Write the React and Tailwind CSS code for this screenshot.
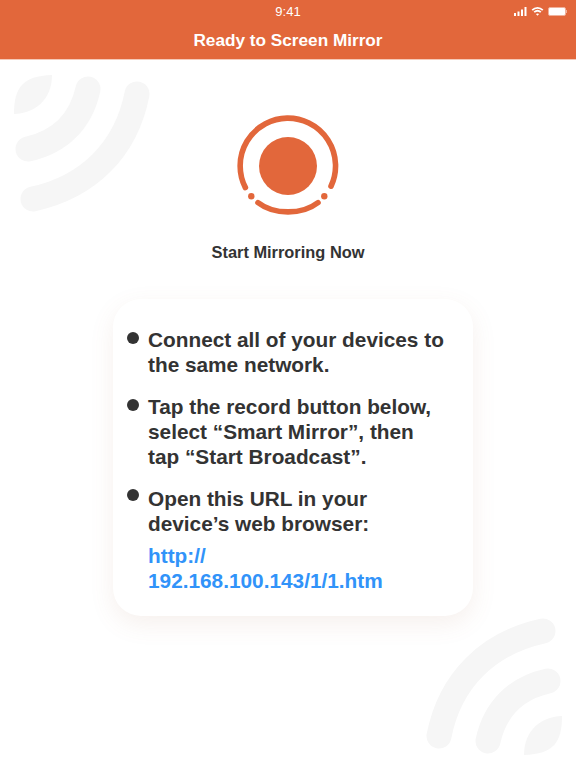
const WifiMark = ({ className }) => (
  <svg className={className} width="140" height="140" viewBox="0 0 140 140" fill="none">
    <path d="M2 40C2 14 10 2 40 1C40 24 25 39 2 40Z" fill="#f6f6f6" />
    <path d="M76 15C69 47 48 68 16 75" stroke="#f6f6f6" strokeWidth="25" strokeLinecap="round" />
    <path d="M125 20C114 76 76 113 21 125" stroke="#f6f6f6" strokeWidth="25" strokeLinecap="round" />
  </svg>
);

const RecordIcon = () => (
  <svg width="102" height="102" viewBox="0 0 102 102" fill="none" stroke="#e2673b" strokeWidth="5.6" strokeLinecap="round">
    <circle cx="51" cy="51" r="29" fill="#e2673b" stroke="none" />
    <path d="M8.4 72.6A47.7 47.7 0 1 1 94 71.2" />
    <path d="M21 87.6C37 100 65 100 81 87.6" />
    <circle cx="14.3" cy="81.2" r="3.2" fill="#e2673b" stroke="none" />
    <circle cx="87.3" cy="81.2" r="3.2" fill="#e2673b" stroke="none" />
  </svg>
);

const Bullet = ({ high, children }) => (
  <div className="flex">
    <div className={high ? "mt-[3px] ml-[14px] mr-[9px] h-[12px] w-[12px] shrink-0 rounded-full bg-[#333333]" : "mt-[5px] ml-[14px] mr-[9px] h-[12px] w-[12px] shrink-0 rounded-full bg-[#333333]"} />
    <div>{children}</div>
  </div>
);

export default function App() {
  return (
    <div className="relative h-[768px] w-[576px] overflow-hidden bg-white font-['Liberation_Sans',sans-serif]">
      {/* 背景のマーク */}
      <WifiMark className="absolute left-[12px] top-[74px]" />
      <WifiMark className="absolute bottom-[12px] right-[12px] rotate-180" />

      {/* ヘッダー */}
      <header className="relative bg-[#e2673b] text-white">
        <div className="relative flex h-[24px] items-center justify-center text-[13px]">
          9:41
          <div className="absolute right-[9px] top-[7px] flex items-center gap-[4px]">
            <svg width="13" height="9" viewBox="0 0 13 9" fill="white">
              <rect x="0" y="6" width="2" height="3" />
              <rect x="3.5" y="4.5" width="2" height="4.5" />
              <rect x="7" y="2.5" width="2" height="6.5" />
              <rect x="10.5" y="0" width="2" height="9" />
            </svg>
            <svg width="13" height="9" viewBox="0 0 12 9" fill="none" stroke="white" strokeWidth="1.8">
              <path d="M.7 3.2C3.8.2 8.2.2 11.3 3.2" />
              <path d="M2.7 5.2C4.6 3.5 7.4 3.5 9.3 5.2" />
              <path d="M6 8.8 4.4 7C5.4 6.2 6.6 6.2 7.6 7Z" fill="white" stroke="none" />
            </svg>
            <div className="flex items-center">
              <div className="h-[9px] w-[18px] rounded-[2px] border border-[#f0b09a] bg-white" />
              <div className="h-[3px] w-[1px] bg-[#f0b09a]" />
            </div>
          </div>
        </div>
        <div className="flex h-[35px] items-start justify-center pt-[6px] text-[17.2px] font-bold leading-[20px]">
          Ready to Screen Mirror
        </div>
      </header>

      {/* メイン */}
      <main className="relative flex flex-col items-center border-t border-[#f5c9b8]">
        <div className="mt-[55px]">
          <RecordIcon />
        </div>
        <p className="mt-[25px] text-[16.4px] font-bold leading-[20px] text-[#333333]">Start Mirroring Now</p>

        <div className="mt-[37px] ml-[113px] flex h-[317px] w-[360px] flex-col gap-[17px] self-start rounded-[28px] bg-white pt-[28px] text-[20.8px] font-bold leading-[25px] text-[#333333] shadow-[0_8px_24px_rgba(170,110,80,0.1)]">
          <Bullet>
            Connect all of your devices to
            <br />
            the same network.
          </Bullet>
          <Bullet>
            Tap the record button below,
            <br />
            select “Smart Mirror”, then
            <br />
            tap “Start Broadcast”.
          </Bullet>
          <Bullet high>
            Open this URL in your
            <br />
            device’s web browser:
            <div className="mt-[7px] text-[#3193f9]">
              http://
              <br />
              192.168.100.143/1/1.htm
            </div>
          </Bullet>
        </div>
      </main>
    </div>
  );
}
